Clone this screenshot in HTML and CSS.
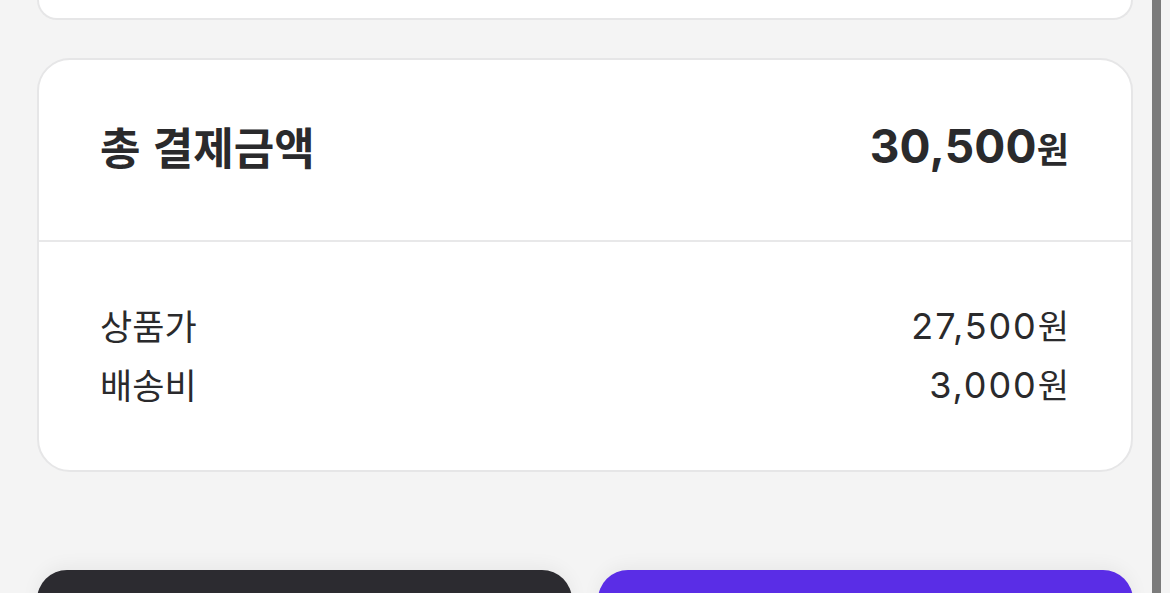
FILE: index.html
```html
<!DOCTYPE html>
<html lang="ko">
<head>
<meta charset="utf-8">
<title>결제</title>
<link rel="stylesheet" href="styles.css">
</head>
<body>
<div class="page">
  <div class="card card-prev"></div>
  <section class="card summary">
    <div class="summary-head">
      <h2 class="total-label">총 결제금액</h2>
      <div class="total-amount"><span class="num">30,500</span><span class="won">원</span></div>
    </div>
    <div class="summary-body">
      <div class="row">
        <span class="row-label">상품가</span>
        <span class="row-amount"><span class="num">27,500</span><span class="won">원</span></span>
      </div>
      <div class="row">
        <span class="row-label">배송비</span>
        <span class="row-amount"><span class="num">3,000</span><span class="won">원</span></span>
      </div>
    </div>
  </section>
  <div class="actions">
    <button class="btn btn-dark" type="button"></button>
    <button class="btn btn-primary" type="button"></button>
  </div>
</div>
<div class="scrollbar"></div>
</body>
</html>
```
FILE: styles.css
```css
html, body {
  margin: 0;
  height: 100%;
  overflow: hidden;
}
body {
  background: #f4f4f4;
  color: #2a2a2c;
  font-family: "Noto Sans CJK KR", "Noto Sans", sans-serif;
}
.page {
  display: flex;
  flex-direction: column;
  padding: 0 37px;
}
.card {
  background: #ffffff;
  border: 2px solid #e6e6e7;
  border-radius: 33px;
  box-sizing: border-box;
}
.card-prev {
  height: 20px;
  border-top: none;
  border-top-left-radius: 0;
  border-top-right-radius: 0;
}
.summary {
  margin-top: 38px;
  height: 414px;
  display: flex;
  flex-direction: column;
}
.summary-head {
  height: 182px;
  box-sizing: border-box;
  display: flex;
  align-items: center;
  justify-content: space-between;
  padding: 0 62px 8px 61px;
  border-bottom: 2px solid #e8e8e9;
}
.total-label {
  margin: 0;
  font-size: 44px;
  font-weight: 700;
  letter-spacing: 0;
}
.total-amount {
  display: flex;
  align-items: baseline;
  font-weight: 700;
}
.total-amount .num {
  font-family: "Inter", "Noto Sans", sans-serif;
  font-size: 46px;
  font-weight: 700;
  letter-spacing: 0.2px;
}
.total-amount .won {
  font-size: 35px;
  font-weight: 700;
}
.summary-body {
  flex: 1;
  padding: 53px 62px 0 61px;
}
.row {
  display: flex;
  justify-content: space-between;
  align-items: center;
  height: 59px;
}
.row-label {
  font-size: 35px;
}
.row-amount {
  display: flex;
  align-items: baseline;
}
.row-amount .num {
  font-family: "Inter", "Noto Sans", sans-serif;
  font-size: 36px;
  font-weight: 400;
  letter-spacing: 1.9px;
}
.row-amount .won {
  font-size: 34px;
}
.actions {
  margin-top: 98px;
  display: flex;
  gap: 26px;
}
.btn {
  flex: 1;
  height: 80px;
  border: none;
  border-radius: 30px;
  box-shadow: 0 -4px 18px rgba(0, 0, 0, 0.05);
}
.btn-dark {
  background: #2c2b30;
}
.btn-primary {
  background: #5a2de6;
}
.scrollbar {
  position: absolute;
  top: 0;
  left: 1152px;
  width: 9px;
  height: 100%;
  background: #7b7b7b;
}
```
